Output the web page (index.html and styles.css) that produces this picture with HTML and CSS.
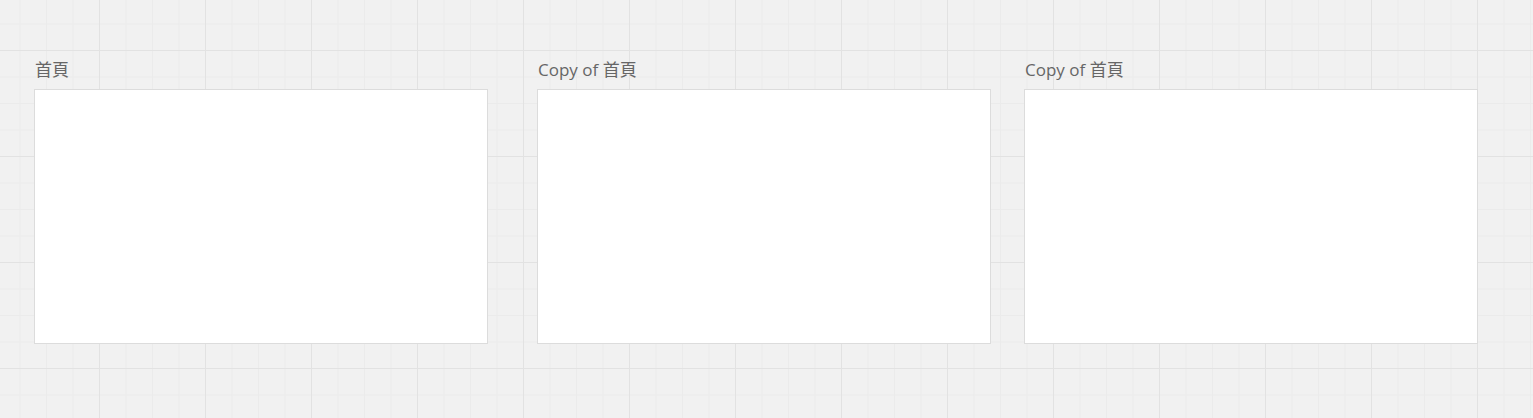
FILE: index.html
```html
<!DOCTYPE html>
<html>
<head>
<meta charset="utf-8">
<link rel="stylesheet" href="styles.css">
</head>
<body>
<div class="canvas">
  <div class="frame frame-1">
    <div class="frame-label">首頁</div>
    <div class="frame-box"></div>
  </div>
  <div class="frame frame-2">
    <div class="frame-label">Copy of 首頁</div>
    <div class="frame-box"></div>
  </div>
  <div class="frame frame-3">
    <div class="frame-label">Copy of 首頁</div>
    <div class="frame-box"></div>
  </div>
</div>
</body>
</html>
```
FILE: styles.css
```css
html, body {
  margin: 0;
  padding: 0;
  width: 1533px;
  height: 418px;
  overflow: hidden;
}
.canvas {
  position: relative;
  width: 1533px;
  height: 418px;
  background-color: #f1f1f1;
  background-image:
    linear-gradient(to right, #e2e2e2 0, #e2e2e2 1px, transparent 1px),
    linear-gradient(to bottom, #e2e2e2 0, #e2e2e2 1px, transparent 1px),
    linear-gradient(to right, #ebebeb 0, #ebebeb 1px, transparent 1px),
    linear-gradient(to bottom, #ebebeb 0, #ebebeb 1px, transparent 1px);
  background-size: 106px 106px, 106px 106px, 26.5px 26.5px, 26.5px 26.5px;
  background-position: 99px 0, 0 50px, 99px 0, 0 50px;
  font-family: "Open Sans", "Noto Sans CJK TC", sans-serif;
}
.frame {
  position: absolute;
  top: 56px;
  display: flex;
  flex-direction: column;
  gap: 6px;
}
.frame-1 { left: 34px; }
.frame-2 { left: 537px; }
.frame-3 { left: 1024px; }
.frame-label {
  font-size: 17px;
  line-height: 27px;
  color: #666;
  padding-left: 1px;
}
.frame-box {
  width: 452px;
  height: 253px;
  background: #fff;
  border: 1px solid #dcdcdc;
}
```
